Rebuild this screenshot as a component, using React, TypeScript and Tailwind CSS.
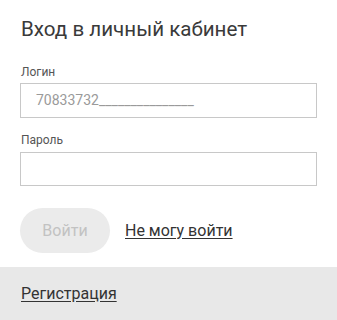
import React from "react";

export default function App() {
  return (
    <div className="w-[337px] h-[320px] bg-white flex flex-col overflow-hidden" style={{ fontFamily: "Roboto, 'Noto Sans', sans-serif" }}>
      <div className="px-[20px] pt-[15px] flex flex-col">
        <h1 className="text-[20.6px] leading-[28px] text-[#3a3a3a] font-normal pl-[1px]">Вход в личный кабинет</h1>
        <label className="mt-[21px] text-[12px] leading-[16px] text-[#555] pl-[1px]">Логин</label>
        <div className="mt-[3px] h-[35px] w-[297px] border border-[#c8c8c8] flex items-center pl-[15px] text-[14px] text-[#9a9a9a]">
          70833732_______________
        </div>
        <label className="mt-[14px] text-[12px] leading-[16px] text-[#555] pl-[1px]">Пароль</label>
        <div className="mt-[4px] h-[34px] w-[297px] border border-[#c8c8c8]" />
        <div className="mt-[22px] flex items-center">
          <button className="w-[90px] h-[45px] rounded-full bg-[#ebebeb] text-[#c2c2c2] text-[16px]">Войти</button>
          <a className="ml-[15px] text-[16px] text-[#333] underline underline-offset-2">Не могу войти</a>
        </div>
      </div>
      <div className="mt-auto h-[53px] bg-[#e8e8e8] flex items-center px-[21px]">
        <a className="text-[16px] text-[#333] underline underline-offset-2">Регистрация</a>
      </div>
    </div>
  );
}
